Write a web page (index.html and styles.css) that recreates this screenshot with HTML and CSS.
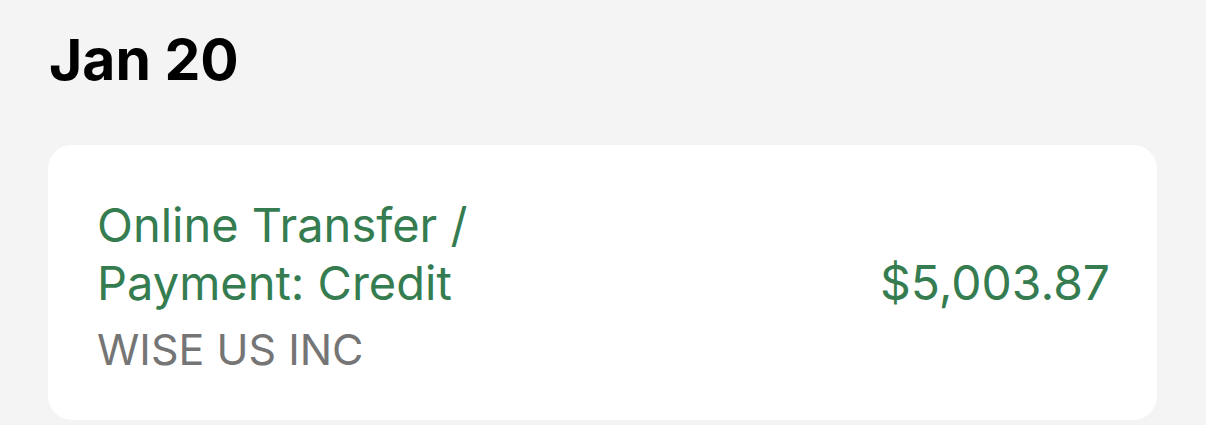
FILE: index.html
```html
<!DOCTYPE html>
<html lang="en">
<head>
  <meta charset="UTF-8">
  <title>Transactions</title>
  <link rel="stylesheet" href="styles.css">
</head>
<body>

  <!-- Day group -->
  <div class="day">
    <h2 class="day-title">Jan 20</h2>

    <div class="card">
      <div class="info">
        <div class="desc">Online Transfer /<br>Payment: Credit</div>
        <div class="payee">WISE US INC</div>
      </div>
      <div class="amount">$5,003.87</div>
    </div>
  </div>

</body>
</html>
```

FILE: styles.css
```css
body {
  margin: 0;
  background: #f4f4f4;
  font-family: Inter, 'Liberation Sans', sans-serif;
}

.day {
  padding: 0 49px 0 48px;
}

.day-title {
  margin: 0;
  padding: 30px 0 0 1px;
  height: 145px;
  box-sizing: border-box;
  font-size: 57px;
  font-weight: 700;
  line-height: 60px;
  color: #000;
}

.card {
  background: #fff;
  border-radius: 24px;
  height: 275px;
  box-sizing: border-box;
  padding: 0 47px 0 49px;
  display: flex;
  align-items: center;
  justify-content: space-between;
}

.info {
  margin-top: 9px;
}

.desc {
  color: #357d50;
  font-size: 47px;
  line-height: 58px;
}

.payee {
  color: #757575;
  font-size: 43px;
  line-height: 58px;
  margin-top: 8px;
}

.amount {
  color: #357d50;
  font-size: 48px;
  line-height: 58px;
}
```
